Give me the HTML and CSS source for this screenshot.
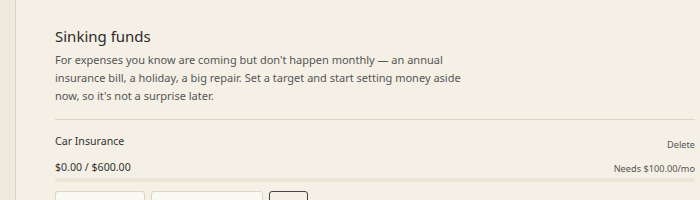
FILE: index.html
```html
<!DOCTYPE html>
<html lang="en">
<head>
    <meta charset="UTF-8">
    <title>Sinking funds</title>
    <link rel="stylesheet" href="styles.css">
</head>
<body>
    <div class="layout">
        <aside class="sidebar"></aside>
        <main class="content">
            <h2>Sinking funds</h2>
            <p class="intro">For expenses you know are coming but don't happen monthly — an annual insurance bill, a holiday, a big repair. Set a target and start setting money aside now, so it's not a surprise later.</p>

            <div class="fund">
                <div class="fund-row">
                    <span class="fund-name">Car Insurance</span>
                    <a class="fund-delete" href="#">Delete</a>
                </div>
                <div class="fund-row fund-row-last">
                    <span class="fund-amount">$0.00 / $600.00</span>
                    <span class="fund-needs">Needs $100.00/mo</span>
                </div>
                <div class="progress"><div class="progress-bar" style="width: 0%;"></div></div>
                <div class="fund-form">
                    <input class="field" type="text" placeholder="Amount">
                    <input class="field field-wide" type="text" placeholder="Note">
                    <button class="btn">Add</button>
                </div>
            </div>
        </main>
    </div>
</body>
</html>
```

FILE: styles.css
```css
body {
    margin: 0;
    background-color: #f4f0e6;
    font-family: "Noto Sans", "Open Sans", sans-serif;
    color: #333;
}

.layout {
    display: flex;
    min-height: 200px;
}

.sidebar {
    width: 15px;
    flex-shrink: 0;
    background-color: #efe9dd;
    border-right: 1px solid #d9d3c5;
}

.content {
    flex: 1;
    padding: 25px 5px 0 39px;
}

h2 {
    margin: 0;
    font-size: 15px;
    font-weight: 400;
    line-height: 22px;
    color: #2b2b2b;
}

.intro {
    margin: 4px 0 0;
    max-width: 408px;
    font-size: 11px;
    line-height: 18px;
    color: #555;
}

.fund {
    margin-top: 14px;
    border-top: 1px solid #dcd6c6;
    padding-top: 13px;
}

.fund-row {
    display: flex;
    justify-content: space-between;
    align-items: center;
    height: 16px;
    margin-bottom: 10px;
}

.fund-row-last {
    margin-bottom: 3px;
}

.fund-name,
.fund-amount {
    font-size: 10.6px;
    color: #333;
}

.fund-delete,
.fund-needs {
    font-size: 9.2px;
    color: #555;
    text-decoration: none;
}

.fund-delete {
    margin-top: 6px;
}

.fund-needs {
    margin-top: 2px;
}

.progress {
    height: 4px;
    border-radius: 2px;
    background-color: #ece5d5;
}

.progress-bar {
    height: 100%;
    background-color: #8a9a6a;
}

.fund-form {
    display: flex;
    gap: 6px;
    margin-top: 9px;
}

.field {
    width: 90px;
    height: 26px;
    box-sizing: border-box;
    border: 1px solid #ddd6c6;
    border-radius: 3px;
    background-color: #fbf9f4;
    font: inherit;
    font-size: 11px;
}

.field-wide {
    width: 112px;
}

.btn {
    height: 26px;
    padding: 0 8px;
    border: 1px solid #444;
    border-radius: 3px;
    background: transparent;
    font: inherit;
    font-size: 11px;
    color: #aaa;
}
```
